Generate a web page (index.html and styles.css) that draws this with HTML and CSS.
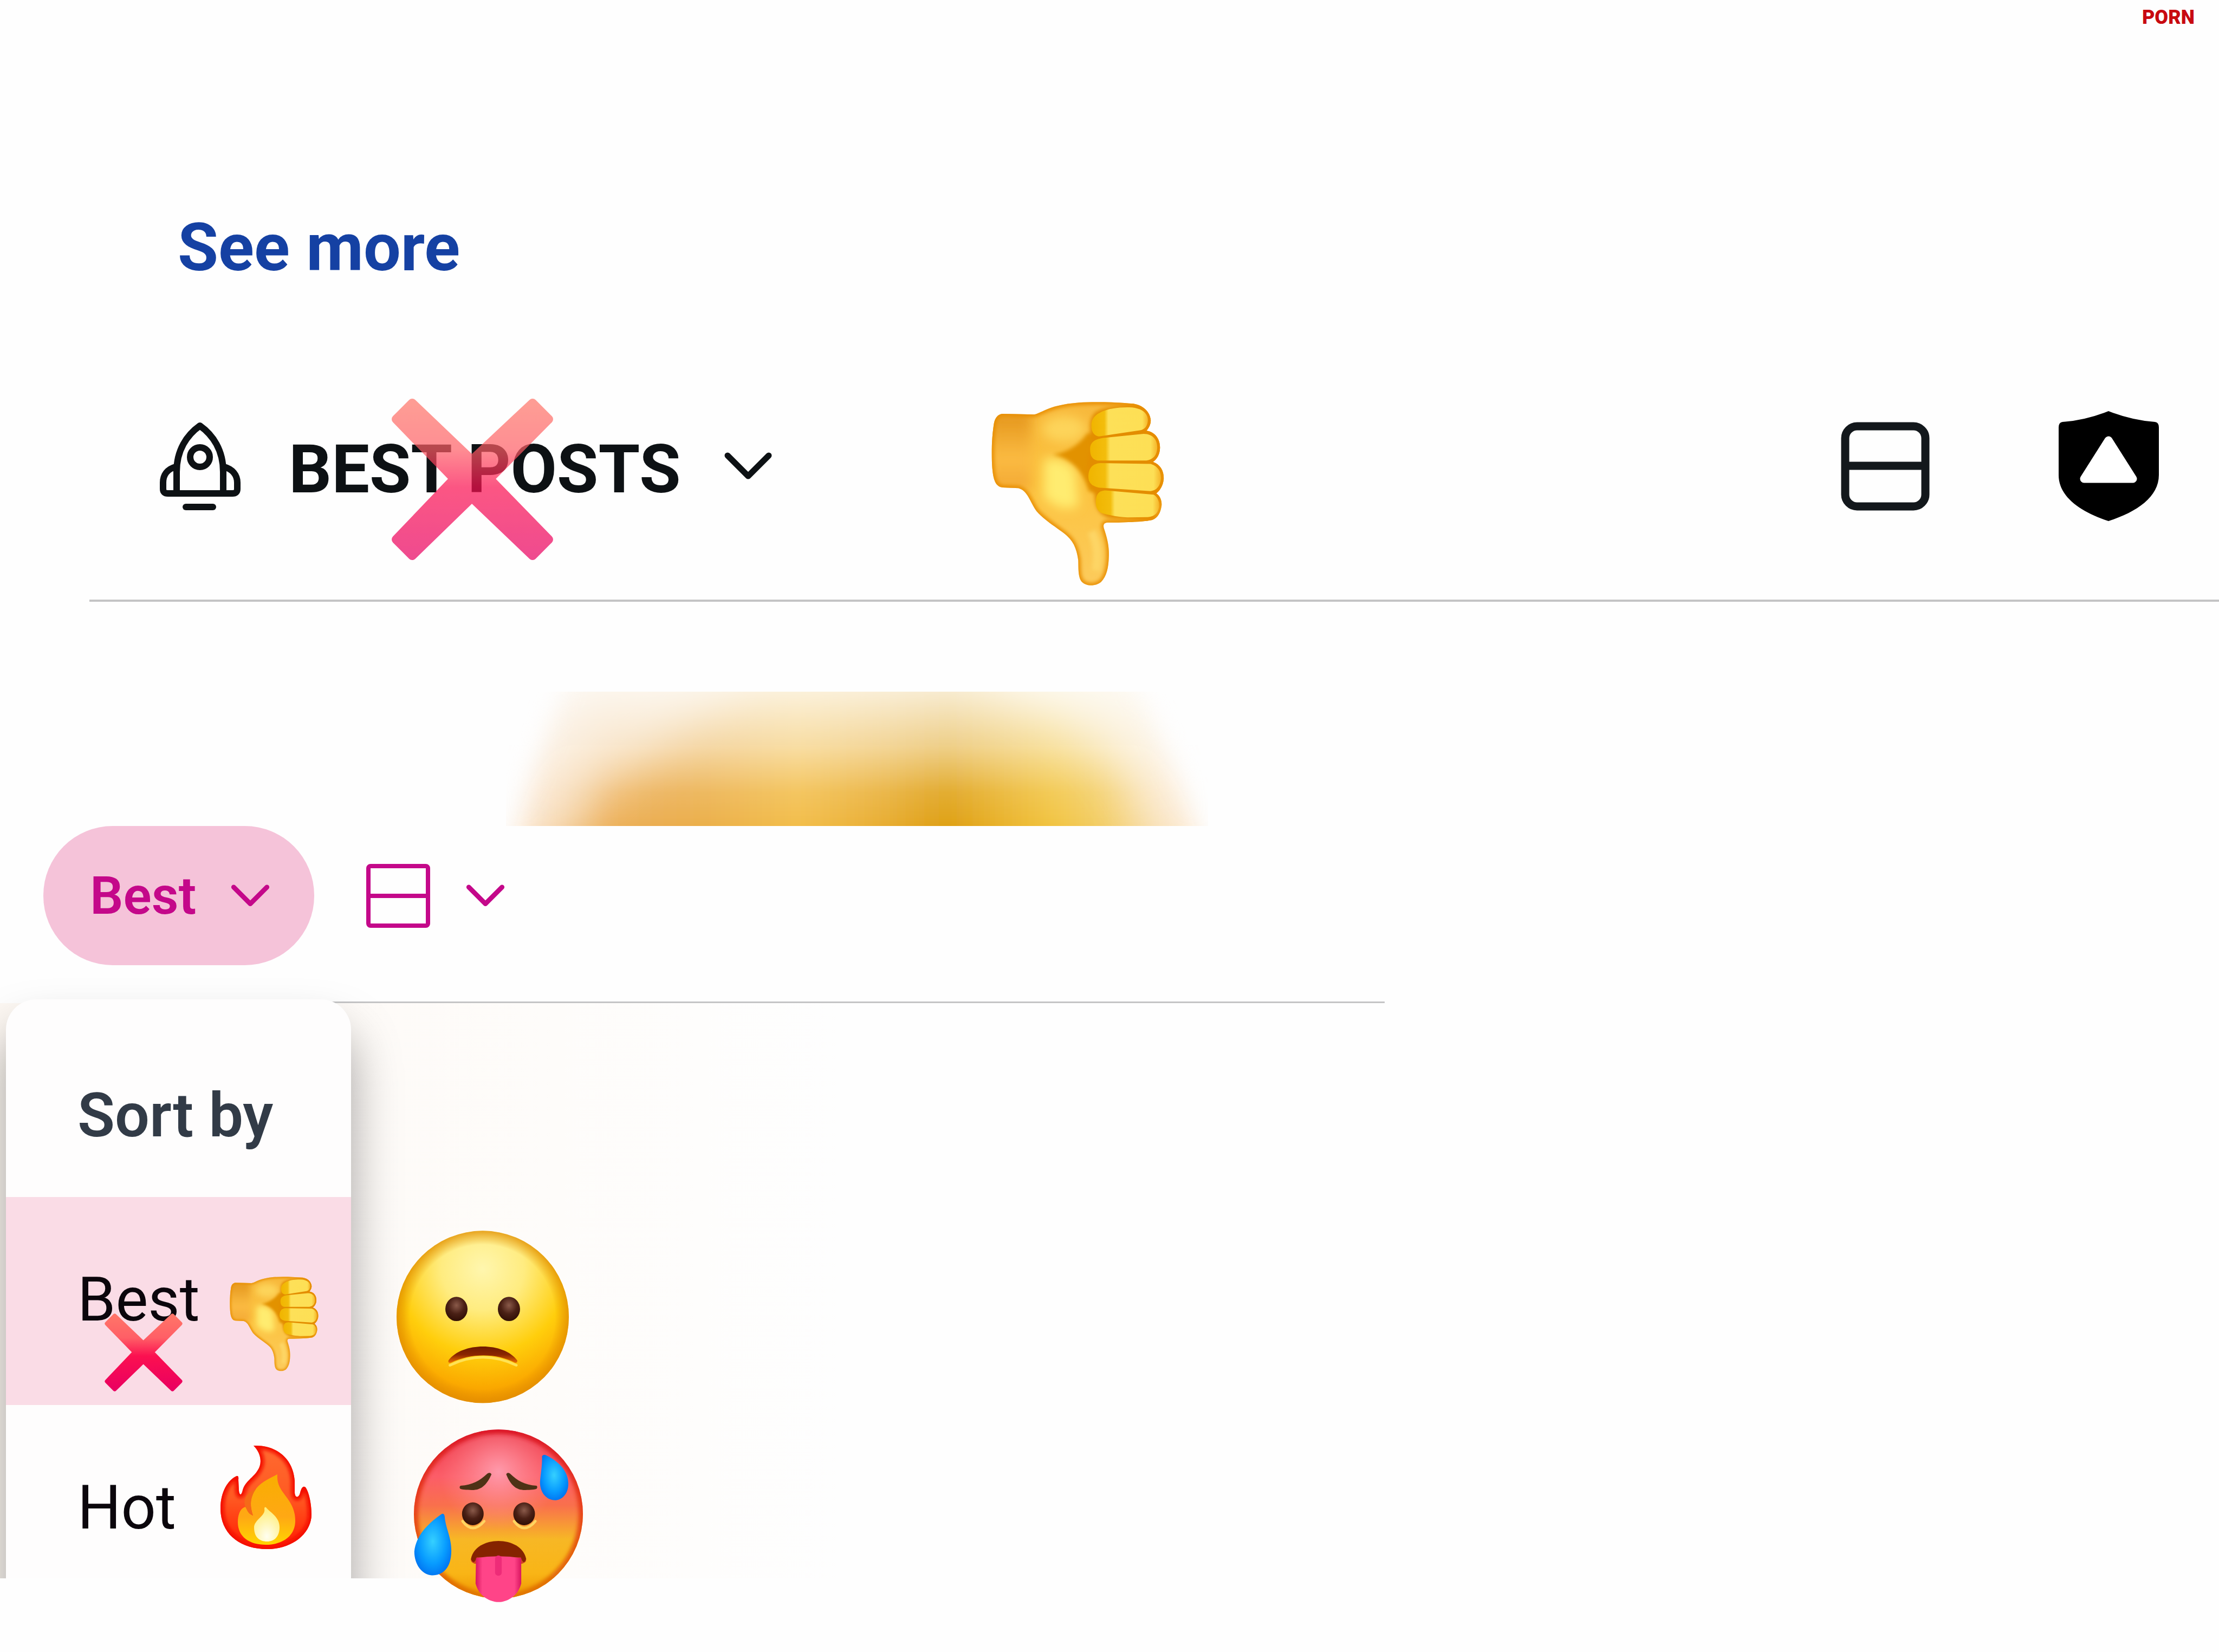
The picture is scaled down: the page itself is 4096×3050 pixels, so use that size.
FILE: index.html
```
<!DOCTYPE html>
<html lang="en">
<head>
  <meta charset="UTF-8">
  <meta name="viewport" content="width=device-width, initial-scale=1.0">
  <title>Best posts</title>
  <link rel="stylesheet" href="styles.css">
</head>
<body>
  <!-- shared shapes -->
  <svg class="sprite" width="0" height="0" aria-hidden="true">
    <defs>
      <linearGradient id="handFill" x1="0" y1="0" x2="0" y2="1">
        <stop offset="0" stop-color="#f7b83c"/>
        <stop offset=".45" stop-color="#fcc33f"/>
        <stop offset="1" stop-color="#fccb5c"/>
      </linearGradient>
      <linearGradient id="wristFill" x1="0" y1="0" x2="0" y2="1">
        <stop offset="0" stop-color="#e3941a"/>
        <stop offset=".6" stop-color="#fbbb42"/>
        <stop offset="1" stop-color="#f3a834"/>
      </linearGradient>
      <linearGradient id="fingerFill" x1="0" y1="0" x2="1" y2="0">
        <stop offset="0" stop-color="#f0b400"/>
        <stop offset=".23" stop-color="#f3bd0c"/>
        <stop offset=".3" stop-color="#fde058"/>
        <stop offset=".9" stop-color="#fddf55"/>
        <stop offset="1" stop-color="#f5b52a"/>
      </linearGradient>
      <filter id="soft" filterUnits="userSpaceOnUse" x="0" y="0" width="1500" height="2800"><feGaussianBlur stdDeviation="14"/></filter>
      <filter id="softer" filterUnits="userSpaceOnUse" x="0" y="0" width="1500" height="1500"><feGaussianBlur stdDeviation="38"/></filter>
      <path id="handShape" d="M215 165L430 170C470 165 520 120 640 100C760 80 900 78 1120 95C1200 110 1235 160 1240 210C1240 240 1225 265 1210 282C1270 290 1305 340 1304 400C1303 450 1280 480 1255 498C1305 515 1332 560 1330 615C1326 665 1300 700 1278 716C1305 735 1318 765 1315 800C1308 850 1290 885 1250 900C1200 912 1080 918 940 918C915 920 910 935 915 955C940 1030 952 1080 950 1150C948 1230 935 1290 895 1330C860 1358 800 1362 765 1330C735 1300 740 1230 738 1180C730 1120 715 1070 680 1030C640 980 520 920 450 840C400 770 390 700 325 680L215 675C165 670 150 620 143 540C135 440 140 320 155 230C162 195 180 168 215 165Z"/>
      <clipPath id="handClip"><use href="#handShape"/></clipPath>
      <symbol id="thumb" viewBox="130 75 1210 1290">
        <use href="#handShape" fill="url(#handFill)"/>
        <g clip-path="url(#handClip)">
          <rect x="120" y="150" width="290" height="540" fill="url(#wristFill)" filter="url(#softer)"/>
          <ellipse cx="640" cy="270" rx="150" ry="90" fill="#fdd45a" filter="url(#softer)"/>
          <path d="M500 480Q640 450 720 560L740 800Q620 860 500 740Z" fill="#ffec70" filter="url(#softer)"/>
          <path d="M560 445C640 440 740 390 800 300L880 300V720L810 700C770 560 700 480 560 445Z" fill="#e29200" filter="url(#soft)"/>
          <path d="M850 160C800 220 830 300 825 400C790 500 790 620 850 700C850 800 870 860 960 890L1260 910L1330 700L1300 100H1100C1000 110 900 120 850 160Z" fill="#e38d00" filter="url(#soft)"/>
          <path d="M830 980Q890 1100 860 1250" fill="none" stroke="#fdd565" stroke-width="60" filter="url(#soft)"/>
          <use href="#handShape" fill="none" stroke="#e88c00" stroke-width="32" filter="url(#soft)"/>
          <g fill="url(#fingerFill)">
            <path d="M830 230C840 150 960 118 1090 120C1180 122 1222 165 1220 210C1218 250 1200 270 1170 278L880 322C840 315 825 280 830 230Z"/>
            <path d="M820 410C820 350 870 335 930 330L1190 304C1260 305 1286 350 1285 400C1283 450 1260 480 1210 488L870 488C830 480 820 450 820 410Z"/>
            <path d="M808 600C808 540 840 508 890 506L1240 512C1295 530 1312 570 1310 615C1306 665 1280 695 1240 700L880 676C830 665 808 640 808 600Z"/>
            <path d="M860 780C860 720 880 696 930 696L1260 725C1292 745 1300 775 1297 810C1290 850 1270 875 1220 880L1080 882C1000 878 930 862 895 850C870 835 860 810 860 780Z"/>
          </g>
        </g>
      </symbol>
      <linearGradient id="crossFill" x1="0" y1="0" x2="0" y2="1">
        <stop offset="0" stop-color="#ff7468"/>
        <stop offset=".3" stop-color="#ff5f66"/>
        <stop offset=".55" stop-color="#fb1050"/>
        <stop offset="1" stop-color="#ea0060"/>
      </linearGradient>
      <symbol id="cross" viewBox="0 0 300 300">
        <path d="M39 9L149 114L261 9L291 39L182 149L291 261L261 291L149 184L39 291L9 261L116 149L9 39Z" fill="url(#crossFill)" stroke="url(#crossFill)" stroke-width="16" stroke-linejoin="round"/>
      </symbol>
      <radialGradient id="eye" cx=".5" cy=".35" r=".6">
        <stop offset="0" stop-color="#8a5a4a"/>
        <stop offset=".6" stop-color="#4a2015"/>
        <stop offset="1" stop-color="#351208"/>
      </radialGradient>
      <symbol id="chevron" viewBox="0 0 88 52">
        <path d="M6 6L44 44L82 6" fill="none" stroke="currentColor" stroke-width="11" stroke-linecap="round" stroke-linejoin="round"/>
      </symbol>
    </defs>
  </svg>

  <header class="topbar">
    <span class="brand">PORN</span>
  </header>

  <main>
    <div class="more"><a href="#">See more</a></div>

    <div class="toolbar">
      <button class="feed-button" type="button">
        <svg class="rocket" viewBox="0 0 150 164" fill="none" stroke="currentColor" stroke-width="12" stroke-linecap="round" stroke-linejoin="round">
          <path d="M31 132V92C31 52 50 24 74 7C98 24 117 52 117 92V132"/>
          <path d="M29 83C14 87 6 98 6 112V124Q6 132 15 132H134Q143 132 143 124V112C143 98 134 87 119 83"/>
          <circle cx="74" cy="65" r="18"/>
          <path d="M48 157H98"/>
        </svg>
        <span class="feed-name">BEST POSTS</span>
        <svg class="chevron"><use href="#chevron"/></svg>
        <svg class="cross cross-large"><use href="#cross"/></svg>
      </button>
      <svg class="thumb-large"><use href="#thumb"/></svg>
      <button class="icon-button view-button" type="button" aria-label="Card view">
        <svg class="view-icon" viewBox="0 0 164 164" fill="none" stroke="currentColor" stroke-width="15">
          <rect x="8" y="8" width="148" height="148" rx="22"/>
          <path d="M8 81H156"/>
        </svg>
      </button>
      <button class="icon-button" type="button" aria-label="Moderation">
        <svg class="shield" viewBox="0 0 185 203">
          <path d="M92 0Q135 17 178 20Q185 21 185 30V118C185 158 145 186 92 203C40 186 0 158 0 118V30Q0 21 7 20Q50 17 92 0Z" fill="#000"/>
          <path d="M92 54L137 125H47Z" fill="#fff" stroke="#fff" stroke-width="15" stroke-linejoin="round"/>
        </svg>
      </button>
    </div>

    <div class="preview">
      <svg class="preview-glow" viewBox="0 0 1296 248" preserveAspectRatio="none">
        <defs>
          <linearGradient id="glow" x1="0" y1="0" x2="1" y2="0">
            <stop offset="0" stop-color="#fdf2e6"/>
            <stop offset=".08" stop-color="#fbe8d4"/>
            <stop offset=".19" stop-color="#ecaf58"/>
            <stop offset=".3" stop-color="#eaae4c"/>
            <stop offset=".43" stop-color="#f3be4c"/>
            <stop offset=".53" stop-color="#e8ae34"/>
            <stop offset=".61" stop-color="#de9f14"/>
            <stop offset=".74" stop-color="#f2c440"/>
            <stop offset=".81" stop-color="#f3cf6c"/>
            <stop offset=".89" stop-color="#fae3c4"/>
            <stop offset="1" stop-color="#fdf0e4"/>
          </linearGradient>
          <filter id="glowBlur" filterUnits="userSpaceOnUse" x="-200" y="-200" width="1700" height="700"><feGaussianBlur stdDeviation="44"/></filter>
          <filter id="edgeBlur" filterUnits="userSpaceOnUse" x="-200" y="-200" width="1700" height="700"><feGaussianBlur stdDeviation="22"/></filter>
          <linearGradient id="glowFade" x1="0" y1="0" x2="0" y2="1">
            <stop offset="0" stop-color="#fff" stop-opacity=".2"/>
            <stop offset=".4" stop-color="#fff" stop-opacity=".5"/>
            <stop offset=".75" stop-color="#fff" stop-opacity=".88"/>
            <stop offset="1" stop-color="#fff"/>
          </linearGradient>
          <mask id="glowMask" maskUnits="userSpaceOnUse" x="0" y="0" width="1296" height="248">
            <rect width="1296" height="248" fill="url(#glowFade)"/>
          </mask>
          <mask id="glowShape" maskUnits="userSpaceOnUse" x="0" y="0" width="1296" height="248">
            <path d="M0 340C30 160 80 60 140 -100H1120C1190 40 1250 140 1296 340Z" fill="#fff" filter="url(#edgeBlur)"/>
          </mask>
        </defs>
        <g mask="url(#glowShape)">
          <g mask="url(#glowMask)">
            <rect x="-100" y="-150" width="1496" height="550" fill="url(#glow)" filter="url(#edgeBlur)"/>
            <path d="M-100 -90H500C400 50 260 70 130 250H-100Z" fill="#fdf6f0" opacity=".5" filter="url(#glowBlur)"/>
            <path d="M900 -90H1400V250H1190C1150 130 1080 40 900 -10Z" fill="#fdf3e6" opacity=".6" filter="url(#glowBlur)"/>
          </g>
        </g>
      </svg>
    </div>

    <div class="sortbar">
      <button class="sort-pill" type="button">
        Best
        <svg class="chevron-small"><use href="#chevron"/></svg>
      </button>
      <button class="view-select" type="button" aria-label="View">
        <svg class="view-icon-small" viewBox="0 0 118 118" fill="none" stroke="currentColor" stroke-width="8">
          <rect x="4" y="4" width="110" height="110" rx="4"/>
          <path d="M4 59H114"/>
        </svg>
        <svg class="chevron-small"><use href="#chevron"/></svg>
      </button>
    </div>

    <div class="results">
      <div class="menu-area">
        <div class="menu">
          <h2>Sort by</h2>
          <ul>
            <li>
              <button class="option selected" type="button">
                Best
                <svg class="thumb-small"><use href="#thumb"/></svg>
                <svg class="cross cross-small"><use href="#cross"/></svg>
              </button>
            </li>
            <li>
              <button class="option" type="button">
                Hot
                <svg class="fire" viewBox="0 0 168 192">
                  <defs>
                    <linearGradient id="fireOuter" x1="0" y1="0" x2="0" y2="1">
                      <stop offset="0" stop-color="#ff6a30"/>
                      <stop offset=".5" stop-color="#ff5a22"/>
                      <stop offset="1" stop-color="#ff1a00"/>
                    </linearGradient>
                    <linearGradient id="fireMid" x1="0" y1="0" x2="0" y2="1">
                      <stop offset="0" stop-color="#f9ae00"/>
                      <stop offset=".6" stop-color="#ffa814"/>
                      <stop offset="1" stop-color="#ffd500"/>
                    </linearGradient>
                    <radialGradient id="fireCore" cx=".5" cy=".85" r=".8">
                      <stop offset="0" stop-color="#fffef0"/>
                      <stop offset="1" stop-color="#ffee7a"/>
                    </radialGradient>
                    <filter id="fireBlur"><feGaussianBlur stdDeviation="3"/></filter>
                    <path id="flame" d="M61 1C100 -1 134 22 137 66L137 88C138 99 145 97 147 88C149 80 152 74 157 78C164 88 168 110 168 128C168 162 134 192 86 192C36 192 0 164 0 117C0 86 14 64 30 57Q34 56 33 64L34 84C35 94 39 93 41 83C46 66 61 60 69 46C78 32 74 14 61 1Z"/>
                    <clipPath id="flameClip"><use href="#flame"/></clipPath>
                  </defs>
                  <use href="#flame" fill="url(#fireOuter)"/>
                  <g clip-path="url(#flameClip)">
                    <use href="#flame" fill="none" stroke="#f40a00" stroke-width="13" filter="url(#fireBlur)"/>
                  </g>
                  <path d="M105 54C102 90 138 96 138 140C138 168 114 184 84 184C54 184 32 170 32 142C32 126 38 116 46 114C50 120 50 126 60 130C54 112 54 96 66 80C78 66 94 60 105 54Z" fill="url(#fireMid)"/>
                  <path d="M46 114C50 121 51 127 60 130C53 112 55 96 66 80C44 90 42 104 46 114Z" fill="#f56a18"/>
                  <path d="M84 115C92 125 109 132 109 152C109 169 99 178 86 178C72 178 62 170 62 152C62 138 84 130 81 118Q81 113 84 115Z" fill="url(#fireCore)"/>
                </svg>
              </button>
            </li>
          </ul>
        </div>
      </div>

      <div class="reactions">
        <svg class="face" viewBox="106 120 1194 1195">
          <defs>
            <radialGradient id="sadFill" cx=".5" cy=".22" r=".8">
              <stop offset="0" stop-color="#fff6ae"/>
              <stop offset=".3" stop-color="#ffec80"/>
              <stop offset=".62" stop-color="#ffce0c"/>
              <stop offset=".85" stop-color="#fbaa00"/>
              <stop offset="1" stop-color="#f09200"/>
            </radialGradient>
            <radialGradient id="sadRim" cx=".5" cy=".5" r=".5">
              <stop offset=".84" stop-color="#e08c00" stop-opacity="0"/>
              <stop offset="1" stop-color="#e08c00" stop-opacity=".75"/>
            </radialGradient>
            <linearGradient id="sadMouth" x1="0" y1="0" x2="0" y2="1">
              <stop offset="0" stop-color="#6e1a00"/>
              <stop offset=".5" stop-color="#8a2600"/>
              <stop offset="1" stop-color="#ea6c00"/>
            </linearGradient>
          </defs>
          <circle cx="703" cy="717" r="597" fill="url(#sadFill)"/>
          <circle cx="703" cy="717" r="597" fill="url(#sadRim)"/>
          <ellipse cx="521" cy="662" rx="77" ry="84" fill="url(#eye)"/>
          <ellipse cx="885" cy="662" rx="77" ry="84" fill="url(#eye)"/>
          <path d="M476 1052Q703 942 936 1052" fill="none" stroke="#ffe255" stroke-width="18" stroke-linecap="round"/>
          <path d="M466 1018C560 890 850 890 942 1018Q946 1038 925 1034C800 968 620 968 484 1034Q460 1040 466 1018Z" fill="url(#sadMouth)"/>
        </svg>
        <svg class="face face-hot" viewBox="225 1495 1170 1195">
          <defs>
            <linearGradient id="hotFill" x1="0" y1="0" x2="0" y2="1">
              <stop offset="0" stop-color="#ea3648"/>
              <stop offset=".28" stop-color="#fc5d68"/>
              <stop offset=".45" stop-color="#f9704c"/>
              <stop offset=".65" stop-color="#f7b725"/>
              <stop offset=".85" stop-color="#f9b516"/>
              <stop offset="1" stop-color="#ee9600"/>
            </linearGradient>
            <radialGradient id="hotShine" cx=".5" cy=".25" r=".35">
              <stop offset="0" stop-color="#ff9daf" stop-opacity=".95"/>
              <stop offset="1" stop-color="#ff8a90" stop-opacity="0"/>
            </radialGradient>
            <linearGradient id="hotRimColor" x1="0" y1="0" x2="0" y2="1">
              <stop offset="0" stop-color="#dc1828"/>
              <stop offset=".45" stop-color="#e8401c"/>
              <stop offset="1" stop-color="#e07800"/>
            </linearGradient>
            <radialGradient id="drop" cx=".5" cy=".45" r=".6">
              <stop offset="0" stop-color="#35d0ff"/>
              <stop offset=".6" stop-color="#089cff"/>
              <stop offset="1" stop-color="#0070f0"/>
            </radialGradient>
            <linearGradient id="tongue" x1="0" y1="0" x2="1" y2="0">
              <stop offset="0" stop-color="#d81560"/>
              <stop offset=".15" stop-color="#ff4488"/>
              <stop offset=".85" stop-color="#ff4488"/>
              <stop offset="1" stop-color="#d81560"/>
            </linearGradient>
            <clipPath id="hotClip"><circle cx="810" cy="2080" r="585"/></clipPath>
          </defs>
          <circle cx="810" cy="2080" r="585" fill="url(#hotFill)"/>
          <circle cx="810" cy="2080" r="585" fill="url(#hotShine)"/>
          <g clip-path="url(#hotClip)">
            <circle cx="810" cy="2080" r="585" fill="none" stroke="url(#hotRimColor)" stroke-width="60" filter="url(#soft)"/>
          </g>
          <g fill="none" stroke="#ffd560" stroke-width="18" stroke-linecap="round">
            <path d="M562 2130Q632 2225 712 2130"/>
            <path d="M918 2130Q988 2225 1066 2130"/>
          </g>
          <ellipse cx="633" cy="2079" rx="75" ry="79" fill="url(#eye)"/>
          <ellipse cx="988" cy="2079" rx="75" ry="79" fill="url(#eye)"/>
          <g fill="#4e3216">
            <path d="M548 1884C630 1880 680 1850 734 1800Q756 1788 762 1806C730 1880 690 1912 640 1914C600 1914 570 1914 546 1906Q536 1892 548 1884Z"/>
            <path d="M1074 1884C992 1880 942 1850 890 1800Q870 1788 864 1806C894 1880 932 1912 982 1914C1022 1914 1050 1914 1074 1906Q1084 1892 1074 1884Z"/>
          </g>
          <path d="M620 2392C650 2225 970 2225 1002 2392Q1000 2420 970 2424L650 2424Q620 2420 620 2392Z" fill="#852300"/>
          <path d="M620 2392Q640 2440 660 2380H965Q985 2440 1002 2392Q1004 2420 970 2424H650Q620 2420 620 2392Z" fill="#d44420"/>
          <path d="M655 2385Q810 2360 968 2385V2560C950 2640 880 2688 812 2690C740 2688 670 2640 652 2560Z" fill="url(#tongue)"/>
          <path d="M810 2390V2485" stroke="#ee2c78" stroke-width="46" stroke-linecap="round"/>
          <path d="M1112 1680Q1118 1666 1136 1672C1220 1710 1294 1780 1294 1870C1294 1940 1250 1985 1200 1985C1140 1982 1098 1930 1098 1860C1102 1800 1114 1750 1112 1680Z" fill="url(#drop)"/>
          <path d="M404 2090Q432 2064 438 2096C444 2180 486 2240 484 2340C482 2450 430 2505 350 2505C280 2500 228 2430 228 2340C240 2230 320 2150 404 2090Z" fill="url(#drop)"/>
        </svg>
      </div>
    </div>
  </main>
</body>
</html>
```
FILE: styles.css
```
* {
  box-sizing: border-box;
}

body {
  margin: 0;
  min-height: 100vh;
  background: #fefefe;
  color: #13181c;
  font-family: Roboto, "Liberation Sans", sans-serif;
  font-size: 113px;
  line-height: 140px;
  overflow-x: hidden;
}

button {
  margin: 0;
  padding: 0;
  border: none;
  background: none;
  color: inherit;
  font: inherit;
  cursor: pointer;
}

svg {
  display: block;
  flex-shrink: 0;
}

.sprite {
  position: absolute;
}

/* top bar */
.topbar {
  display: flex;
  justify-content: flex-end;
  height: 388px;
  padding: 12px 45px;
}

.brand {
  font-size: 36px;
  line-height: 40px;
  font-weight: 900;
  color: #c80a10;
}

.more {
  height: 234px;
  padding-left: 328px;
}

.more a {
  color: #1541a3;
  font-size: 122px;
  font-weight: 700;
  text-decoration: none;
}

/* feed toolbar */
.toolbar {
  display: flex;
  align-items: center;
  height: 485px;
  padding: 0 111px 8px 295px;
}

.feed-button {
  position: relative;
  display: flex;
  align-items: center;
  height: 100%;
  color: #0d1114;
}

.rocket {
  width: 150px;
  height: 164px;
}

.feed-name {
  margin: 0 80px 0 88px;
  padding-top: 12px;
  font-size: 124px;
  font-weight: 700;
}

.chevron {
  width: 88px;
  height: 52px;
}

.cross-large {
  position: absolute;
  left: 427px;
  top: 113px;
  width: 300px;
  height: 300px;
  opacity: .7;
}

.thumb-large {
  align-self: flex-end;
  width: 323px;
  height: 344px;
  margin: 0 0 15px 403px;
}

.view-button {
  margin-left: auto;
  margin-right: 238px;
}

.view-icon {
  width: 164px;
  height: 164px;
}

.shield {
  width: 185px;
  height: 203px;
}

/* blurred post preview */
.preview {
  height: 418px;
  margin-left: 165px;
  padding: 166px 0 0 769px;
  border-top: 4px solid #c4c4c5;
}

.preview-glow {
  width: 1296px;
  height: 248px;
}

/* sort bar */
.sortbar {
  display: flex;
  align-items: center;
  gap: 96px;
  padding-left: 80px;
  color: #c4088a;
}

.sort-pill {
  display: flex;
  align-items: center;
  gap: 64px;
  height: 257px;
  padding: 0 82px 0 86px;
  border-radius: 128px;
  background: #f5c3d9;
  font-size: 97px;
  font-weight: 600;
}

.view-select {
  display: flex;
  align-items: center;
  gap: 66px;
}

.view-icon-small {
  width: 118px;
  height: 118px;
}

.chevron-small {
  width: 72px;
  height: 42px;
}

/* results */
.results {
  display: flex;
  align-items: flex-start;
  margin-top: 63px;
  background:
    linear-gradient(to right, transparent 600px, #c4c4c5 600px) 0 4px / 62.4% 3px no-repeat,
    linear-gradient(to right, #fdf8f3, #fefcfa 25%, #fefefe 38%) 0 7px / 100% 1062px no-repeat;
}

.menu-area {
  height: 1069px;
  padding-left: 11px;
  clip-path: inset(-80px -200px 0 0);
}

.menu {
  width: 637px;
  height: 1149px;
  border-radius: 56px;
  background: #fefdfd;
  box-shadow: 0 60px 90px rgba(0, 0, 0, .36);
}

.menu h2 {
  height: 365px;
  margin: 0;
  padding: 145px 0 0 132px;
  color: #323b47;
  font-size: inherit;
  font-weight: 600;
}

.menu ul {
  margin: 0;
  padding: 0;
  list-style: none;
}

.option {
  position: relative;
  display: flex;
  align-items: center;
  justify-content: space-between;
  width: 100%;
  height: 384px;
  padding: 0 59px 4px 132px;
  color: #0b060c;
}

.selected {
  background: #fadce6;
}

.thumb-small {
  width: 166px;
  height: 177px;
  margin-top: 88px;
}

.cross-small {
  position: absolute;
  left: 182px;
  top: 215px;
  width: 144px;
  height: 144px;
}

.fire {
  width: 168px;
  height: 192px;
  margin: 0 14px 40px 0;
}

.reactions {
  display: flex;
  flex-direction: column;
  gap: 48px;
  padding: 427px 0 0 84px;
}

.face {
  width: 318px;
  height: 319px;
}

.face-hot {
  width: 312px;
  height: 319px;
  margin-left: 32px;
}
```
